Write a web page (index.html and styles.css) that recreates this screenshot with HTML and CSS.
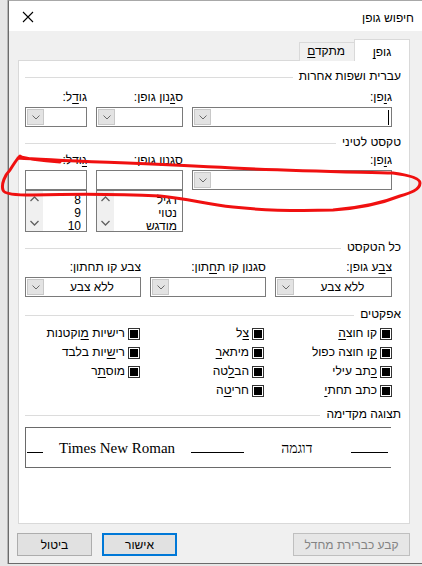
FILE: index.html
```html
<!DOCTYPE html>
<html lang="he" dir="rtl">
<head>
<meta charset="utf-8">
<title>חיפוש גופן</title>
<link rel="stylesheet" href="styles.css">
</head>
<body>
<div class="screen">
  <div class="window">
    <div class="titlebar">
      <span class="title">חיפוש גופן</span>
      <svg class="close" width="12" height="12" viewBox="0 0 12 12"><path d="M1 1L11 11M11 1L1 11" stroke="#000" stroke-width="1.1" fill="none"/></svg>
    </div>
    <div class="client">
      <div class="tabs">
        <div class="tab active">גופ<u>ן</u></div>
        <div class="tab">מתקד<u>ם</u></div>
      </div>
      <div class="panel">
        <div class="sec-head"><span>עברית ושפות אחרות</span></div>
        <div class="fields r1">
          <div class="field w-font"><div class="lbl">ג<u>ו</u>פן:</div><div class="combo"><span class="caret"></span><span class="dd"><svg width="8" height="5" viewBox="0 0 8 5"><path d="M0.5 0.5L4 4L7.5 0.5" stroke="#6a6a6a" fill="none"/></svg></span></div></div>
          <div class="field w-style"><div class="lbl">ס<u>ג</u>נון גופן:</div><div class="combo"><span class="dd"><svg width="8" height="5" viewBox="0 0 8 5"><path d="M0.5 0.5L4 4L7.5 0.5" stroke="#6a6a6a" fill="none"/></svg></span></div></div>
          <div class="field w-size"><div class="lbl">גו<u>ד</u>ל:</div><div class="combo"><span class="dd"><svg width="8" height="5" viewBox="0 0 8 5"><path d="M0.5 0.5L4 4L7.5 0.5" stroke="#6a6a6a" fill="none"/></svg></span></div></div>
        </div>

        <div class="sec-head"><span>טקסט לטיני</span></div>
        <div class="fields r2">
          <div class="field w-font"><div class="lbl">ג<u>ו</u>פן:</div><div class="combo"><span class="dd"><svg width="8" height="5" viewBox="0 0 8 5"><path d="M0.5 0.5L4 4L7.5 0.5" stroke="#6a6a6a" fill="none"/></svg></span></div></div>
          <div class="field w-style"><div class="lbl">סגנון גופן:</div><div class="combo plain"></div>
            <div class="listbox">
              <div class="items"><div>רגיל</div><div>נטוי</div><div>מודגש</div></div>
              <div class="sbar"><svg width="9" height="6" viewBox="0 0 9 6"><path d="M0.5 5L4.5 1L8.5 5" stroke="#606060" stroke-width="1.3" fill="none"/></svg><svg width="9" height="6" viewBox="0 0 9 6"><path d="M0.5 1L4.5 5L8.5 1" stroke="#606060" stroke-width="1.3" fill="none"/></svg></div>
            </div>
          </div>
          <div class="field w-size"><div class="lbl"><u>ג</u>ודל:</div><div class="combo plain"></div>
            <div class="listbox">
              <div class="items"><div>8</div><div>9</div><div>10</div></div>
              <div class="sbar"><svg width="9" height="6" viewBox="0 0 9 6"><path d="M0.5 5L4.5 1L8.5 5" stroke="#606060" stroke-width="1.3" fill="none"/></svg><svg width="9" height="6" viewBox="0 0 9 6"><path d="M0.5 1L4.5 5L8.5 1" stroke="#606060" stroke-width="1.3" fill="none"/></svg></div>
            </div>
          </div>
        </div>

        <div class="sec-head"><span>כל הטקסט</span></div>
        <div class="fields r3">
          <div class="field w-c1"><div class="lbl">צ<u>ב</u>ע גופן:</div><div class="combo"><span class="val">ללא צבע</span><span class="dd"><svg width="8" height="5" viewBox="0 0 8 5"><path d="M0.5 0.5L4 4L7.5 0.5" stroke="#6a6a6a" fill="none"/></svg></span></div></div>
          <div class="field w-c2"><div class="lbl">סגנון קו ת<u>ח</u>תון:</div><div class="combo"><span class="dd"><svg width="8" height="5" viewBox="0 0 8 5"><path d="M0.5 0.5L4 4L7.5 0.5" stroke="#6a6a6a" fill="none"/></svg></span></div></div>
          <div class="field w-c3"><div class="lbl">צבע קו תחתון:</div><div class="combo"><span class="val">ללא צבע</span><span class="dd"><svg width="8" height="5" viewBox="0 0 8 5"><path d="M0.5 0.5L4 4L7.5 0.5" stroke="#6a6a6a" fill="none"/></svg></span></div></div>
        </div>

        <div class="sec-head"><span>אפקטים</span></div>
        <div class="effects">
          <div class="chk"><span class="box"></span><span>קו חוצ<u>ה</u></span></div>
          <div class="chk"><span class="box"></span><span><u>צ</u>ל</span></div>
          <div class="chk"><span class="box"></span><span>רישיות <u>מ</u>וקטנות</span></div>
          <div class="chk"><span class="box"></span><span><u>ק</u>ו חוצה כפול</span></div>
          <div class="chk"><span class="box"></span><span>מיתא<u>ר</u></span></div>
          <div class="chk"><span class="box"></span><span>רי<u>ש</u>יות בלבד</span></div>
          <div class="chk"><span class="box"></span><span><u>כ</u>תב עילי</span></div>
          <div class="chk"><span class="box"></span><span>הב<u>ל</u>טה</span></div>
          <div class="chk"><span class="box"></span><span>מוס<u>ת</u>ר</span></div>
          <div class="chk"><span class="box"></span><span>כתב תחת<u>י</u></span></div>
          <div class="chk"><span class="box"></span><span>חרי<u>ט</u>ה</span></div>
        </div>

        <div class="sec-head"><span>תצוגה מקדימה</span></div>
        <div class="preview" dir="ltr">
          <span class="ln l1"></span>
          <span class="ptxt latin">Times New Roman</span>
          <span class="ln l2"></span>
          <span class="ptxt heb" dir="rtl">דוגמה</span>
          <span class="ln l3"></span>
        </div>
      </div>
      <div class="buttons">
        <button class="btn wide" disabled>קבע כברירת מחדל</button>
        <span class="spacer"></span>
        <button class="btn ok">אישור</button>
        <button class="btn">ביטול</button>
      </div>
    </div>
  </div>
  <svg class="scribble" width="422" height="566" viewBox="0 0 422 566"><path d="M18 158 C 60 161, 140 163, 233 168 C 300 171, 360 172, 393 173 C 408 175, 420 178, 420 183 C 420 190, 410 193, 400 196 C 385 202, 360 208, 333 210 C 300 211, 260 210, 233 207 C 205 204, 190 199, 160 196 C 120 194, 70 194, 33 195 C 15 195, 4 194, 3 190 C 1 184, 5 175, 10 170 C 14 164, 16 160, 20 156 C 22 158, 40 161, 60 162" stroke="#f01010" stroke-width="3" fill="none" stroke-linecap="round" stroke-linejoin="round"/></svg>
</div>
</body>
</html>
```

FILE: styles.css
```css
* { box-sizing: border-box; }
html, body { margin: 0; padding: 0; }
body {
  font-family: "Liberation Sans", "DejaVu Sans", sans-serif;
  font-size: 12px;
  color: #000;
  background: #e9e9e9;
}
.screen {
  position: relative;
  width: 422px;
  height: 566px;
  overflow: hidden;
  background: #e6e6e6;
}
.window {
  margin-left: 8px;
  height: 564px;
  border-left: 1px solid #6b6b6b;
  border-top: 1px solid #a8a8a8;
  border-bottom: 1px solid #6b6b6b;
  box-shadow: -1px 0 0 #b5b5b5;
  background: #f0f0f0;
  display: flex;
  flex-direction: column;
}
.titlebar {
  height: 30px;
  background: #fff;
  display: flex;
  align-items: center;
  justify-content: space-between;
  padding: 0 8px 0 13px;
}
.title { font-size: 12px; margin-top: 4px; }
.close { margin-top: 2px; }
.client {
  flex: 1;
  display: flex;
  flex-direction: column;
  padding: 8px 12px 0 8px;
}
.tabs {
  display: flex;
  align-items: flex-end;
  height: 22px;
  position: relative;
  z-index: 1;
  margin-bottom: -1px;
}
.tab {
  height: 19px;
  padding: 0 9px;
  border: 1px solid #d9d9d9;
  border-bottom: none;
  background: #f0f0f0;
  line-height: 17px;
  width: 55px;
  text-align: center;
}
.tab.active {
  height: 22px;
  width: 56px;
  background: #fff;
  line-height: 24px;
  border-color: #d9d9d9;
}
.tab:not(.active) { border-right: none; }
u { text-decoration: underline; text-underline-offset: 2px; }
.panel {
  height: 464px;
  background: #fff;
  border: 1px solid #d9d9d9;
  margin-left: 1px;
  padding: 8px 8px 0 6px;
}
.sec-head {
  display: flex;
  align-items: center;
  height: 15px;
  line-height: 15px;
  gap: 6px;
}
.sec-head::after {
  content: "";
  flex: 1;
  border-top: 1px solid #dcdcdc;
  margin-top: 1px;
}
.fields {
  display: flex;
  gap: 9px;
  margin-right: 9px;
}
.r1 { margin-top: 6px; margin-bottom: 8px; }
.r2 { margin-top: 3px; margin-bottom: 8px; }
.r3 { margin-top: 5px; margin-bottom: 10px; }
.field { display: flex; flex-direction: column; }
.lbl { height: 15px; line-height: 15px; margin-bottom: 2px; white-space: nowrap; }
.w-font { width: 200px; }
.w-style { width: 87px; }
.w-size { width: 62px; }
.w-c1 { width: 117px; }
.w-c2 { width: 116px; }
.w-c3 { width: 116px; }
.combo {
  height: 20px;
  border: 1px solid #7a7a7a;
  background: #fff;
  display: flex;
  align-items: center;
  position: relative;
}
.combo .dd {
  position: absolute;
  left: 1px;
  top: 1px;
  width: 17px;
  height: 16px;
  background: #e3e3e3;
  border: 1px solid #c8c8c8;
  display: flex;
  align-items: center;
  justify-content: center;
}
.combo .caret {
  width: 1px;
  height: 15px;
  background: #000;
  margin-right: 2px;
}
.combo .val {
  flex: 1;
  text-align: center;
  padding-left: 18px;
  line-height: 18px;
}
.listbox {
  height: 42px;
  border: 1px solid #7a7a7a;
  background: #fff;
  display: flex;
}
.listbox .items {
  flex: 1;
  padding: 3px 5px 0 0;
  line-height: 13px;
}
.sbar {
  width: 17px;
  background: #f0f0f0;
  display: flex;
  flex-direction: column;
  justify-content: space-between;
  align-items: center;
  padding: 5px 0 5px;
}
.effects {
  display: grid;
  grid-template-columns: 128px 124px 1fr;
  grid-auto-rows: 19px;
  margin-right: 9px;
  margin-top: 2px;
  margin-bottom: 7px;
}
.chk {
  display: flex;
  align-items: center;
  gap: 3px;
  line-height: 15px;
  white-space: nowrap;
}
.box {
  width: 12px;
  height: 12px;
  border: 1px solid #333;
  padding: 1px;
  background: #fff;
  flex: none;
}
.box::before {
  content: "";
  display: block;
  width: 8px;
  height: 8px;
  background: #000;
}
.preview {
  margin-top: 5px;
  margin-right: 10px;
  height: 41px;
  border: 1px solid #6a6a6a;
  border-right: none;
  display: flex;
  align-items: baseline;
  padding: 11px 0 0 1px;
  font-family: "Liberation Serif", "DejaVu Serif", serif;
  font-size: 15px;
  line-height: 18px;
  white-space: nowrap;
}
.ln {
  display: inline-block;
  border-bottom: 1px solid #000;
  height: 1px;
  flex: none;
}
.l1 { width: 16px; }
.latin { margin-left: 16px; }
.l2 { width: 53px; margin-left: 16px; }
.heb { margin-left: 37px; font-size: 14px; }
.l3 { width: 37px; margin-left: 39px; }
.buttons {
  display: flex;
  gap: 10px;
  padding-top: 9px;
}
.spacer { flex: 1; }
.btn {
  height: 23px;
  width: 75px;
  border: 1px solid #adadad;
  background: #e1e1e1;
  font-family: inherit;
  font-size: 12px;
  color: #000;
  padding: 0;
}
.btn.wide { width: 117px; color: #838383; border-color: #bfbfbf; background: #e6e6e6; }
.btn.ok { border: 2px solid #0078d7; }
.scribble {
  position: absolute;
  left: 0;
  top: 0;
  pointer-events: none;
}
```
